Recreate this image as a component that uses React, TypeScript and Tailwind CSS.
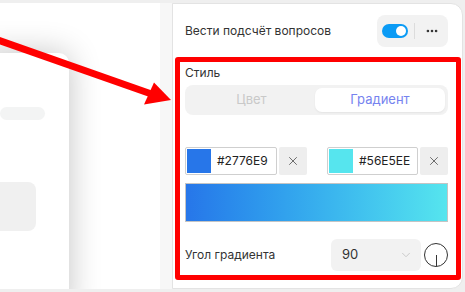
import { X, ChevronDown, MoreHorizontal } from "lucide-react";

export default function App() {
  return (
    <div
      className="relative w-[465px] h-[292px] bg-[#efefef] py-[3px] flex overflow-hidden"
      style={{ fontFamily: "Inter, 'Noto Sans', sans-serif" }}
    >
      {/* Left canvas */}
      <div className="relative w-[160px] h-full bg-white overflow-hidden">
        <div className="absolute left-[-20px] top-[50px] w-[89px] h-[260px] bg-white rounded-tr-[10px] shadow-[0_0_32px_rgba(0,0,0,0.24)]">
          <div className="mt-[54px] ml-[20px] w-[45px] h-[13px] rounded-full bg-[#f3f4f4]" />
          <div className="mt-[62px] ml-[20px] w-[36px] h-[49px] rounded-r-[8px] bg-[#f0f0f0]" />
        </div>
      </div>
      <div className="w-[12px] h-full bg-[#f7f7f7]" />

      {/* Settings panel */}
      <div className="w-[291px] h-full bg-white border border-[#e3e3e3] rounded-r-[12px] px-[12px] pt-[11px]">
        <div className="flex items-center justify-between pr-[2px]">
          <span className="text-[12px] text-[#333]">Вести подсчёт вопросов</span>
          <div className="flex items-center h-[32px] w-[71px] rounded-[8px] bg-[#f2f2f2] pl-[5px]">
            <div className="relative w-[26px] h-[14px] rounded-full bg-[#0b9bf5]">
              <div className="absolute right-[2px] top-[2px] w-[10px] h-[10px] rounded-full bg-white" />
            </div>
            <div className="ml-[6px] w-px h-[16px] bg-[#dcdcdc]" />
            <MoreHorizontal className="ml-[10px] w-[14px] h-[14px] text-[#333]" strokeWidth={2.5} />
          </div>
        </div>

        <div className="mt-[20px] text-[12px] text-[#333] leading-none">Стиль</div>
        <div className="mt-[6px] flex h-[30px] w-[263px] rounded-[8px] bg-[#f2f2f2] p-[3px] text-[13px]">
          <div className="flex-1 flex items-center justify-center text-[#c9c9c9]">Цвет</div>
          <div className="w-[130px] flex items-center justify-center rounded-[7px] bg-white text-[#7683ef] shadow-[0_1px_2px_rgba(0,0,0,0.06)]">
            Градиент
          </div>
        </div>

        <div className="mt-[32px] flex items-center w-[263px]">
          <div className="flex items-center h-[28px] w-[92px] border border-[#cfcfcf] rounded-[2px] pl-[1px]">
            <div className="w-[24px] h-[24px] bg-[#2776E9]" />
            <span className="ml-[6px] text-[12px] text-[#222]">#2776E9</span>
          </div>
          <div className="ml-[2px] w-[28px] h-[28px] flex items-center justify-center bg-[#eeeeee] rounded-[2px]">
            <X className="w-[14px] h-[14px] text-[#444]" strokeWidth={1.3} />
          </div>
          <div className="ml-[20px] flex items-center h-[28px] w-[91px] border border-[#cfcfcf] rounded-[2px] pl-[1px]">
            <div className="w-[24px] h-[24px] bg-[#56E5EE]" />
            <span className="ml-[6px] text-[12px] text-[#222]">#56E5EE</span>
          </div>
          <div className="ml-[2px] w-[28px] h-[28px] flex items-center justify-center bg-[#eeeeee] rounded-[2px]">
            <X className="w-[14px] h-[14px] text-[#444]" strokeWidth={1.3} />
          </div>
        </div>

        <div className="mt-[8px] w-[263px] h-[39px] border border-[#c4c4c4] bg-gradient-to-r from-[#2776E9] to-[#56E5EE]" />

        <div className="mt-[17px] flex items-center w-[263px]">
          <span className="text-[12px] text-[#333]">Угол градиента</span>
          <div className="ml-auto flex items-center justify-between w-[90px] h-[32px] rounded-[6px] bg-[#f2f2f2] pl-[11px] pr-[8px]">
            <span className="text-[13px] text-[#333]">90</span>
            <ChevronDown className="w-[14px] h-[14px] text-[#c4c4c4]" strokeWidth={1.5} />
          </div>
          <div className="relative ml-[3px] w-[24px] h-[24px] rounded-full border border-[#333]">
            <div className="absolute left-1/2 top-1/2 w-px h-[11px] bg-[#333]" />
          </div>
        </div>
      </div>

      {/* Annotation overlay */}
      <div className="absolute left-[175px] top-[57px] w-[286px] h-[223px] border-[5px] border-[#ff0000] rounded-[3px] pointer-events-none" />
      <svg className="absolute left-0 top-0 pointer-events-none" width="465" height="292">
        <line x1="-2" y1="40" x2="150" y2="93.5" stroke="#ff0000" strokeWidth="7" />
        <polygon points="144,104.5 154,82.5 171,100" fill="#ff0000" />
      </svg>
    </div>
  );
}
